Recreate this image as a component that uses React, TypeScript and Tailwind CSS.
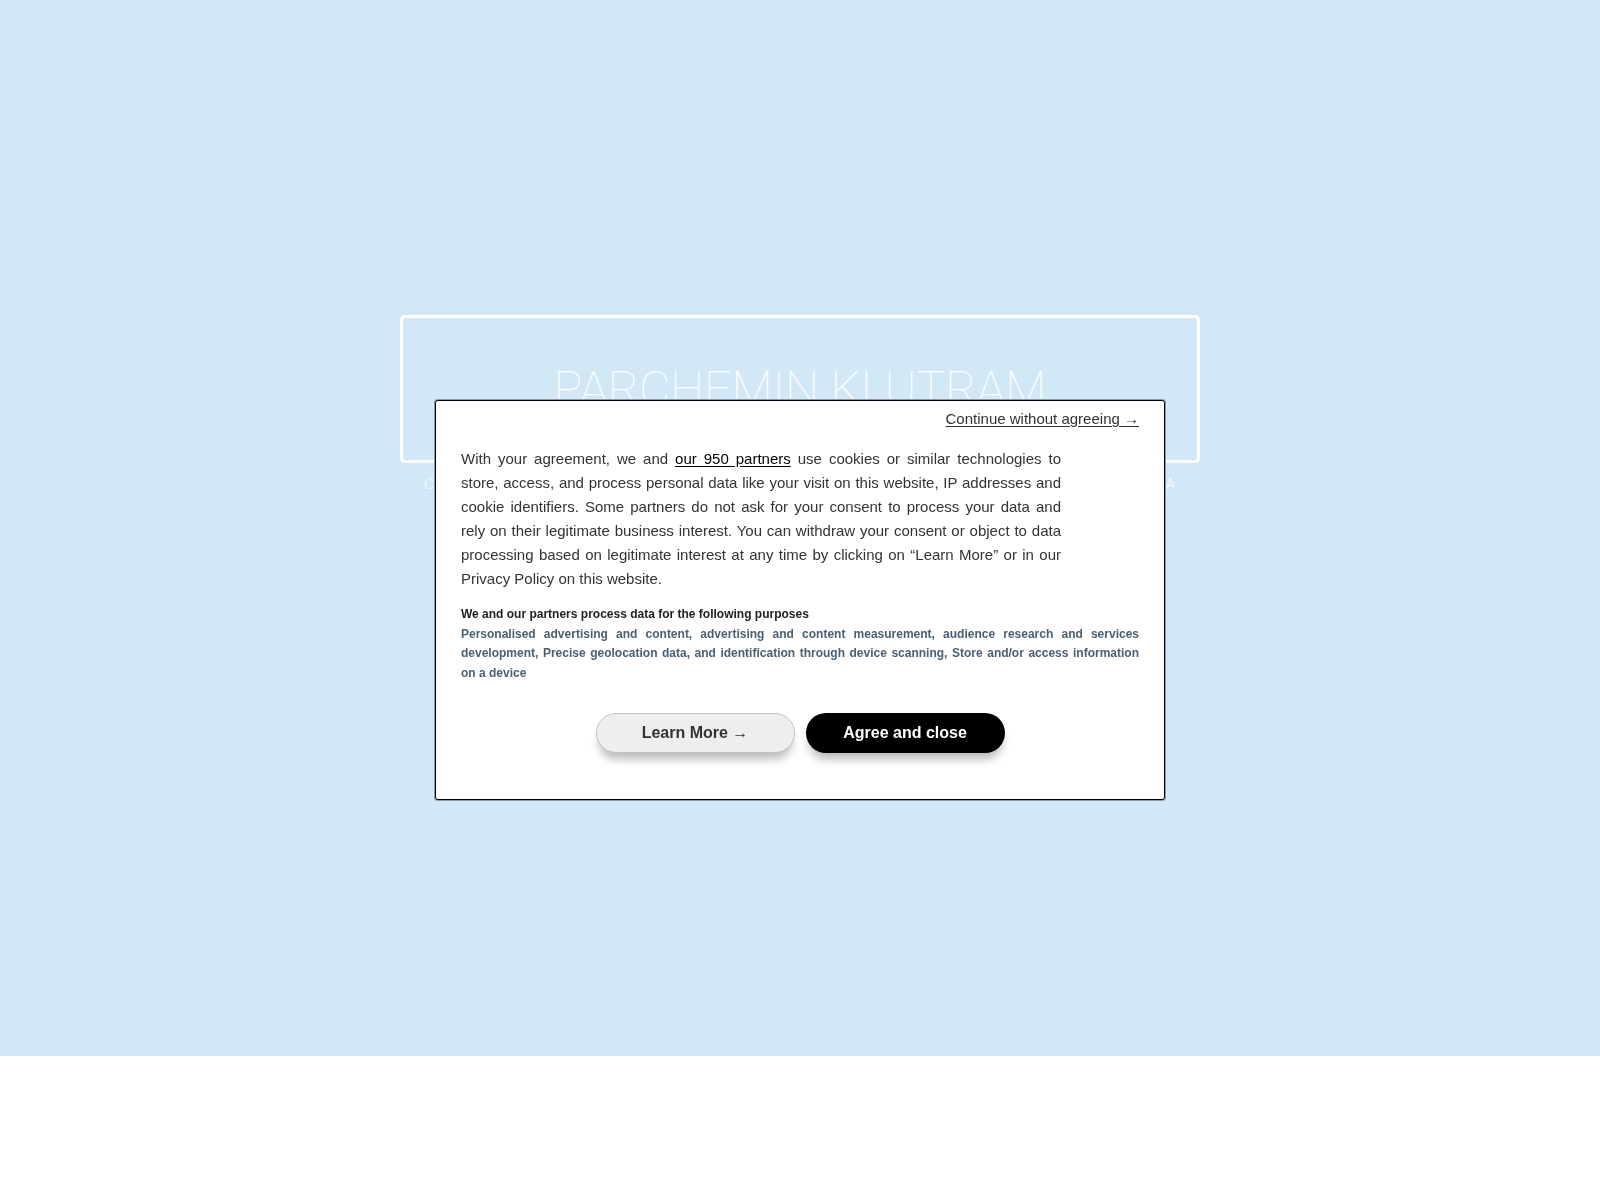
import React from 'react';

const sans = 'font-["Liberation_Sans",Arial,sans-serif]';

const Hero: React.FC = () => (
  <div className="flex h-[1056px] w-full flex-col items-center bg-[#d3e8f6] pt-[315px]">
    <div className="flex h-[148px] w-[800px] items-start justify-center rounded-[5px] border-[3px] border-white pt-[43px]">
      <h1 className="font-['Roboto',sans-serif] text-[48px] leading-[56px] font-thin text-white">
        PARCHEMIN KLUTRAM
      </h1>
    </div>
    <p className="mt-[12px] w-[752px] text-justify font-['Roboto',sans-serif] text-[15px] leading-[18px] font-light tracking-[1px] text-white/80 [text-align-last:justify]">
      CONSEIL EN IMMOBILIER · GESTION DE PATRIMOINE · VENTE · LOCATION · ESTIMATION A
    </p>
  </div>
);

const ConsentModal: React.FC = () => {
  return (
    <div className="fixed inset-0 flex items-center justify-center">
      <div
        className={`${sans} flex w-[730px] flex-col rounded-[3px] border border-black bg-white px-[25px] pt-[8px] pb-[46px] shadow-[0_0_0_1px_#8a9aa8]`}
      >
        <div className="flex justify-end">
          <a
            href="#"
            className="text-[15px] leading-[20px] text-[#333] underline underline-offset-2"
          >
            Continue without agreeing →
          </a>
        </div>

        <p className="mt-[18px] w-[600px] text-justify text-[15px] leading-[24px] text-[#333]">
          With your agreement, we and{' '}
          <a href="#" className="text-black underline underline-offset-2">
            our 950 partners
          </a>{' '}
          use cookies or similar technologies to store, access, and process personal data like your
          visit on this website, IP addresses and cookie identifiers. Some partners do not ask for
          your consent to process your data and rely on their legitimate business interest. You can
          withdraw your consent or object to data processing based on legitimate interest at any
          time by clicking on “Learn More” or in our Privacy Policy on this website.
        </p>

        <div className="mt-[14px] text-[12px] leading-[19.5px] font-bold">
          <div className="text-[#222]">We and our partners process data for the following purposes</div>
          <p className="text-justify text-[#4b6073]">
            Personalised advertising and content, advertising and content measurement, audience
            research and services development, Precise geolocation data, and identification through
            device scanning, Store and/or access information on a device
          </p>
        </div>

        <div className="mt-[30px] flex justify-center gap-[11px]">
          <button className="h-[40px] w-[199px] rounded-full border border-[#c4c4c4] bg-[#eeeeee] text-[16px] font-bold text-[#333] shadow-[0_9px_10px_-3px_rgba(0,0,0,0.28)]">
            Learn More →
          </button>
          <button className="h-[40px] w-[199px] rounded-full bg-black text-[16px] font-bold text-white shadow-[0_9px_10px_-3px_rgba(0,0,0,0.28)]">
            Agree and close
          </button>
        </div>
      </div>
    </div>
  );
};

export default function App() {
  return (
    <div className="relative h-[1200px] w-full bg-white">
      <Hero />
      <ConsentModal />
    </div>
  );
}
